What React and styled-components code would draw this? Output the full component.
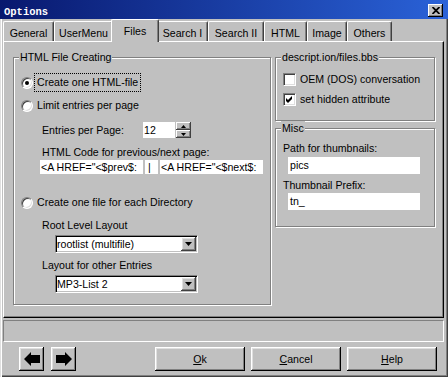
import React from 'react';
import styled, { createGlobalStyle } from 'styled-components';

const GlobalStyle = createGlobalStyle`
  html, body {
    margin: 0;
    padding: 0;
    background: #c0c0c0;
  }
  body {
    font-family: "Liberation Sans", Arial, sans-serif;
    font-size: 10.6px;
    color: #000;
  }
  * {
    box-sizing: border-box;
  }
`;

const Window = styled.div`
  width: 448px;
  height: 377px;
  display: flex;
  flex-direction: column;
  background: #c0c0c0;
  overflow: hidden;
  box-shadow: inset 1px 0 #dfdfdf, inset 2px 0 #fff, inset -1px -1px #404040,
    inset -2px -2px #808080;
`;

const TitleBar = styled.div`
  height: 19px;
  flex-shrink: 0;
  display: flex;
  align-items: flex-start;
  padding: 0 5px 0 4px;
  background: linear-gradient(to right, #08186e, #2a62d8);
`;

const Title = styled.span`
  margin-top: 6px;
  font-family: "Liberation Mono", "Courier New", monospace;
  font-weight: bold;
  font-size: 10.5px;
  line-height: 12px;
  color: #fff;
`;

const CloseButton = styled.div`
  margin: 4px 0 0 auto;
  width: 15px;
  height: 13px;
  display: flex;
  align-items: center;
  justify-content: center;
  background: #c0c0c0;
  box-shadow: inset -1px -1px #000, inset 1px 1px #fff, inset -2px -2px #808080;
`;

const Body = styled.div`
  flex: 1;
  display: flex;
  flex-direction: column;
  padding: 0 4px 0 3px;
`;

const TabStrip = styled.div`
  position: relative;
  z-index: 1;
  height: 23px;
  display: flex;
  align-items: flex-end;
`;

const Tab = styled.div`
  position: relative;
  z-index: ${(p) => (p.$active ? 2 : 1)};
  width: ${(p) => p.$width}px;
  height: ${(p) => (p.$active ? 23 : 20)}px;
  margin: ${(p) => (p.$active ? '0 -2px' : '0 0 1px')};
  padding-top: 3px;
  text-align: center;
  line-height: 16px;
  white-space: nowrap;
  background: #c0c0c0;
  border-top: 1px solid #fff;
  border-left: 1px solid #fff;
  border-right: 1px solid #404040;
  border-top-left-radius: 2px;
  border-top-right-radius: 2px;
  box-shadow: inset -1px 0 #808080;
`;

const Panel = styled.div`
  height: 277px;
  margin-top: -1px;
  display: flex;
  gap: 4px;
  align-items: flex-start;
  padding: 15px 0 0 9px;
  border-top: 1px solid #fff;
  border-left: 1px solid #fff;
  border-right: 1px solid #000;
  border-bottom: 1px solid #000;
  box-shadow: inset -1px -1px #808080;
`;

const Column = styled.div`
  display: flex;
  flex-direction: column;
`;

const GroupBox = styled.div`
  width: ${(p) => p.$w}px;
  height: ${(p) => p.$h}px;
  margin-top: ${(p) => p.$mt || 0}px;
  display: flex;
  flex-direction: column;
  align-items: flex-start;
  padding: 0 7px;
  border: 1px solid #808080;
  box-shadow: inset 1px 1px #fff, 1px 1px #fff;
`;

const Caption = styled.span`
  margin: -8px 0 0 -2px;
  padding: 0 1px;
  line-height: 14px;
  white-space: nowrap;
  background: #c0c0c0;
`;

const Row = styled.div`
  display: flex;
  align-items: center;
  height: ${(p) => p.$h}px;
  margin-top: ${(p) => p.$mt}px;
  padding-left: ${(p) => p.$indent || 0}px;
`;

const Label = styled.span`
  display: block;
  width: ${(p) => (p.$w ? `${p.$w}px` : 'auto')};
  line-height: 14px;
  white-space: nowrap;
  flex-shrink: 0;
`;

const RadioCircle = styled.span`
  width: 12px;
  height: 12px;
  flex-shrink: 0;
  display: flex;
  align-items: center;
  justify-content: center;
  border-radius: 50%;
  border: 1px solid;
  border-color: #808080 #fff #fff #808080;
  background: #fff;
  box-shadow: inset 1px 1px #404040, inset -1px -1px #dfdfdf;
`;

const RadioDot = styled.span`
  width: 4px;
  height: 4px;
  border-radius: 50%;
  background: #000;
`;

const OptionText = styled.span`
  margin-left: 2px;
  padding: 1px 2px;
  line-height: 15px;
  white-space: nowrap;
  outline: ${(p) => (p.$focused ? '1px dotted #000' : 'none')};
`;

const CheckBox = styled.span`
  width: 13px;
  height: 13px;
  flex-shrink: 0;
  display: flex;
  align-items: center;
  justify-content: center;
  border: 1px solid;
  border-color: #808080 #fff #fff #808080;
  background: #fff;
  box-shadow: inset 1px 1px #404040, inset -1px -1px #dfdfdf;
`;

const CheckText = styled.span`
  margin-left: 4px;
  line-height: 13px;
  white-space: nowrap;
`;

const TextField = styled.div`
  width: ${(p) => p.$w}px;
  height: ${(p) => p.$h}px;
  margin-left: ${(p) => p.$ml || 0}px;
  margin-top: ${(p) => p.$mt || 0}px;
  padding-left: ${(p) => (p.$pad === undefined ? 2 : p.$pad)}px;
  line-height: ${(p) => p.$h}px;
  white-space: nowrap;
  overflow: hidden;
  background: #fff;
  flex-shrink: 0;
`;

const SpinButtons = styled.div`
  width: 15px;
  margin-left: 1px;
  display: flex;
  flex-direction: column;
`;

const SpinButton = styled.div`
  height: 8px;
  display: flex;
  align-items: center;
  justify-content: center;
  background: #c0c0c0;
  box-shadow: inset -1px -1px #404040, inset 1px 1px #fff, inset -2px -2px #808080;
`;

const Combo = styled.div`
  width: 143px;
  height: 18px;
  margin: ${(p) => p.$mt}px 0 0 34px;
  display: flex;
  align-items: center;
  padding: 1px;
  background: #fff;
  border: 1px solid;
  border-color: #808080 #fff #fff #808080;
  box-shadow: inset 1px 1px #000, inset -1px -1px #c0c0c0;
`;

const ComboText = styled.span`
  flex: 1;
  line-height: 14px;
  white-space: nowrap;
  overflow: hidden;
`;

const DropButton = styled.span`
  width: 15px;
  height: 14px;
  display: flex;
  align-items: center;
  justify-content: center;
  background: #c0c0c0;
  box-shadow: inset -1px -1px #404040, inset 1px 1px #fff, inset -2px -2px #808080,
    inset 2px 2px #dfdfdf;
`;

const StatusBar = styled.div`
  height: 22px;
  margin-top: 2px;
  border-top: 1px solid #808080;
  border-left: 1px solid #808080;
  border-bottom: 1px solid #fff;
  border-right: 1px solid #fff;
`;

const ButtonRow = styled.div`
  margin-top: 5px;
  display: flex;
  padding: 0 7px 0 16px;
`;

const ButtonGroup = styled.div`
  display: flex;
  gap: ${(p) => p.$gap}px;
  margin-left: ${(p) => (p.$right ? 'auto' : 0)};
`;

const PushButton = styled.button`
  width: ${(p) => p.$w}px;
  height: 24px;
  padding: 0;
  border: none;
  display: flex;
  align-items: center;
  justify-content: center;
  font: inherit;
  color: #000;
  background: #c0c0c0;
  box-shadow: inset -1px -1px #000, inset 1px 1px #fff, inset -2px -2px #808080,
    inset 2px 2px #dfdfdf;
`;

const tabs = [
  { label: 'General', width: 51 },
  { label: 'UserMenu', width: 59 },
  { label: 'Files', width: 48, active: true },
  { label: 'Search I', width: 51 },
  { label: 'Search II', width: 56 },
  { label: 'HTML', width: 43 },
  { label: 'Image', width: 40 },
  { label: 'Others', width: 45 },
];

const Radio = ({ checked, focused, children, mt }) => (
  <Row $h={17} $mt={mt}>
    <RadioCircle>{checked && <RadioDot />}</RadioCircle>
    <OptionText $focused={focused}>{children}</OptionText>
  </Row>
);

const Check = ({ checked, children, mt }) => (
  <Row $h={13} $mt={mt}>
    <CheckBox>
      {checked && (
        <svg width="7" height="7" viewBox="0 0 7 7">
          <path d="M0 2 L2 4 L6 0 L6 3 L2 7 L0 5 Z" fill="#000" />
        </svg>
      )}
    </CheckBox>
    <CheckText>{children}</CheckText>
  </Row>
);

const DownTriangle = () => (
  <svg width="7" height="4" viewBox="0 0 7 4">
    <path d="M0 0 H7 L3.5 4 Z" fill="#000" />
  </svg>
);

const ComboBox = ({ value, mt }) => (
  <Combo $mt={mt}>
    <ComboText>{value}</ComboText>
    <DropButton>
      <DownTriangle />
    </DropButton>
  </Combo>
);

const ArrowIcon = ({ dir }) => (
  <svg width="16" height="14" viewBox="0 0 16 14">
    <polygon
      fill="#000"
      points={
        dir === 'left'
          ? '0,7 7,0 7,3 16,3 16,11 7,11 7,14'
          : '16,7 9,0 9,3 0,3 0,11 9,11 9,14'
      }
    />
  </svg>
);

export default function App() {
  return (
    <>
      <GlobalStyle />
      <Window>
        <TitleBar>
          <Title>Options</Title>
          <CloseButton>
            <svg width="8" height="7" viewBox="0 0 8 7">
              <path d="M0.5 0 L7.5 7 M7.5 0 L0.5 7" stroke="#000" strokeWidth="1.8" />
            </svg>
          </CloseButton>
        </TitleBar>
        <Body>
          <TabStrip>
            {tabs.map((t) => (
              <Tab key={t.label} $width={t.width} $active={t.active}>
                {t.label}
              </Tab>
            ))}
          </TabStrip>
          <Panel>
            <GroupBox $w={258} $h={248}>
              <Caption>HTML File Creating</Caption>
              <Radio checked focused mt={10}>
                Create one HTML-file
              </Radio>
              <Radio mt={6}>Limit entries per page</Radio>
              <Row $h={16} $mt={8} $indent={21}>
                <Label $w={101}>Entries per Page:</Label>
                <TextField $w={32} $h={16} $pad={1}>
                  12
                </TextField>
                <SpinButtons>
                  <SpinButton>
                    <svg width="5" height="3" viewBox="0 0 5 3">
                      <path d="M0 3 H5 L2.5 0 Z" fill="#000" />
                    </svg>
                  </SpinButton>
                  <SpinButton>
                    <svg width="5" height="3" viewBox="0 0 5 3">
                      <path d="M0 0 H5 L2.5 3 Z" fill="#000" />
                    </svg>
                  </SpinButton>
                </SpinButtons>
              </Row>
              <Row $h={14} $mt={7} $indent={21}>
                <Label>HTML Code for previous/next page:</Label>
              </Row>
              <Row $h={14} $mt={1} $indent={19}>
                <TextField $w={103} $h={14} $pad={1}>
                  {'<A HREF="<$prev$:'}
                </TextField>
                <TextField $w={13} $h={14} $ml={2} $pad={3}>
                  |
                </TextField>
                <TextField $w={103} $h={14} $ml={2} $pad={1}>
                  {'<A HREF="<$next$:'}
                </TextField>
              </Row>
              <Radio mt={20}>Create one file for each Directory</Radio>
              <Row $h={14} $mt={7} $indent={21}>
                <Label>Root Level Layout</Label>
              </Row>
              <ComboBox value="rootlist (multifile)" mt={3} />
              <Row $h={14} $mt={5} $indent={21}>
                <Label>Layout for other Entries</Label>
              </Row>
              <ComboBox value="MP3-List 2" mt={3} />
            </GroupBox>
            <Column>
              <GroupBox $w={160} $h={64}>
                <Caption>descript.ion/files.bbs</Caption>
                <Check mt={9}>OEM (DOS) conversation</Check>
                <Check checked mt={7}>
                  set hidden attribute
                </Check>
              </GroupBox>
              <GroupBox $w={160} $h={99} $mt={7}>
                <Caption>Misc</Caption>
                <Row $h={14} $mt={6}>
                  <Label>Path for thumbnails:</Label>
                </Row>
                <TextField $w={132} $h={17} $ml={5} $mt={2}>
                  pics
                </TextField>
                <Row $h={14} $mt={4}>
                  <Label>Thumbnail Prefix:</Label>
                </Row>
                <TextField $w={132} $h={17} $ml={5} $mt={1}>
                  tn_
                </TextField>
              </GroupBox>
            </Column>
          </Panel>
          <StatusBar />
          <ButtonRow>
            <ButtonGroup $gap={7}>
              <PushButton $w={25}>
                <ArrowIcon dir="left" />
              </PushButton>
              <PushButton $w={25}>
                <ArrowIcon dir="right" />
              </PushButton>
            </ButtonGroup>
            <ButtonGroup $gap={6} $right>
              <PushButton $w={90}>
                <span>
                  <u>O</u>k
                </span>
              </PushButton>
              <PushButton $w={90}>
                <span>
                  <u>C</u>ancel
                </span>
              </PushButton>
              <PushButton $w={90}>
                <span>
                  <u>H</u>elp
                </span>
              </PushButton>
            </ButtonGroup>
          </ButtonRow>
        </Body>
      </Window>
    </>
  );
}
